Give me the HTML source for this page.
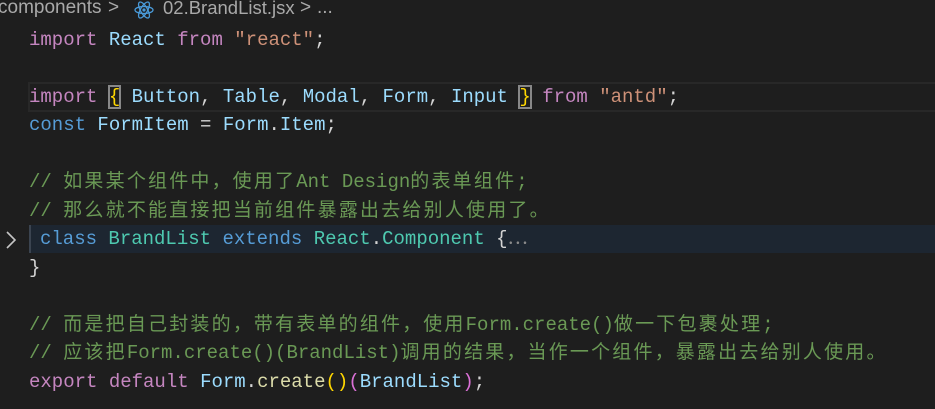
<!DOCTYPE html>
<html><head><meta charset="utf-8"><style>
html,body{margin:0;padding:0;background:#1e1e1e;width:935px;height:409px;overflow:hidden;position:relative}
.bc{position:absolute;top:-4px;font:19px "Liberation Sans","Noto Sans CJK SC",sans-serif;color:#a9a9a9;white-space:pre;line-height:24px}
.l{position:absolute;left:29px;height:28px;font:19px/28px "Liberation Mono","Noto Sans CJK SC",monospace;white-space:pre;color:#d4d4d4}
.k{color:#c586c0}.v{color:#9cdcfe}.s{color:#ce9178}.t{color:#4ec9b0}.b{color:#569cd6}.c{color:#6a9955}.f{color:#dcdcaa}.g{color:#ffd700}
.cur{position:absolute;left:28px;right:-2px;top:82px;height:26px;border:2px solid #282828}
.hl{position:absolute;left:29px;right:0;top:225px;height:28px;background:#1d2631;border-left:2px solid #3b4450}
.m{outline:2px solid #888;outline-offset:-1px}
.z{letter-spacing:2.2px}
.q{display:inline-block;width:21px}
</style></head><body>
<div class="bc" style="left:-2px">components</div>
<div class="bc" style="left:108px">&gt;</div>
<svg style="position:absolute;left:134px;top:0" width="20" height="20" viewBox="0 0 20 20"><g fill="none" stroke="#4a9ad8" stroke-width="1.3"><ellipse cx="10" cy="10" rx="9" ry="3.5"/><ellipse cx="10" cy="10" rx="9" ry="3.5" transform="rotate(60 10 10)"/><ellipse cx="10" cy="10" rx="9" ry="3.5" transform="rotate(120 10 10)"/></g><circle cx="10" cy="10" r="1.6" fill="#4a9ad8"/></svg>
<div class="bc" style="left:163px;font-size:18.5px">02.BrandList.jsx</div>
<div class="bc" style="left:300px">&gt;</div>
<div class="bc" style="left:317px">...</div>
<div class="cur"></div>
<div class="hl"></div>
<svg style="position:absolute;left:4px;top:230px" width="14" height="20"><path d="M3 2 L11 10 L3 18" fill="none" stroke="#c5c5c5" stroke-width="1.6"/></svg>
<div class="l" style="top:26px"><span class="k">import</span> <span class="v">React</span> <span class="k">from</span> <span class="s">"react"</span>;</div>
<div class="l" style="top:83px"><span class="k">import</span> <span class="g m">{</span> <span class="v">Button</span>, <span class="v">Table</span>, <span class="v">Modal</span>, <span class="v">Form</span>, <span class="v">Input</span> <span class="g m">}</span> <span class="k">from</span> <span class="s">"antd"</span>;</div>
<div class="l" style="top:111px"><span class="b">const</span> <span class="v">FormItem</span> = <span class="v">Form</span>.<span class="v">Item</span>;</div>
<div class="l c" style="top:168px">// <span class="z">如果某个组件中</span><span class="q">，</span><span class="z">使用了</span>Ant Design<span class="z">的表单组件</span>;</div>
<div class="l c" style="top:197px">// <span class="z">那么就不能直接把当前组件暴露出去给别人使用了。</span></div>
<div class="l" style="top:225px;left:40px"><span class="b">class</span> <span class="t">BrandList</span> <span class="b">extends</span> <span class="t">React</span>.<span class="t">Component</span> {<span style="color:#8a8a8a">⋯</span></div>
<div class="l" style="top:254px">}</div>
<div class="l c" style="top:311px">// <span class="z">而是把自己封装的</span><span class="q">，</span><span class="z">带有表单的组件</span><span class="q">，</span><span class="z">使用</span>Form.create()<span class="z">做一下包裹处理</span>;</div>
<div class="l c" style="top:339px">// <span class="z">应该把</span>Form.create()(BrandList)<span class="z">调用的结果</span><span class="q">，</span><span class="z">当作一个组件</span><span class="q">，</span><span class="z">暴露出去给别人使用。</span></div>
<div class="l" style="top:368px"><span class="k">export</span> <span class="k">default</span> <span class="v">Form</span>.<span class="f">create</span><span class="g">()</span><span style="color:#da70d6">(</span><span class="v">BrandList</span><span style="color:#da70d6">)</span>;</div>
</body></html>
